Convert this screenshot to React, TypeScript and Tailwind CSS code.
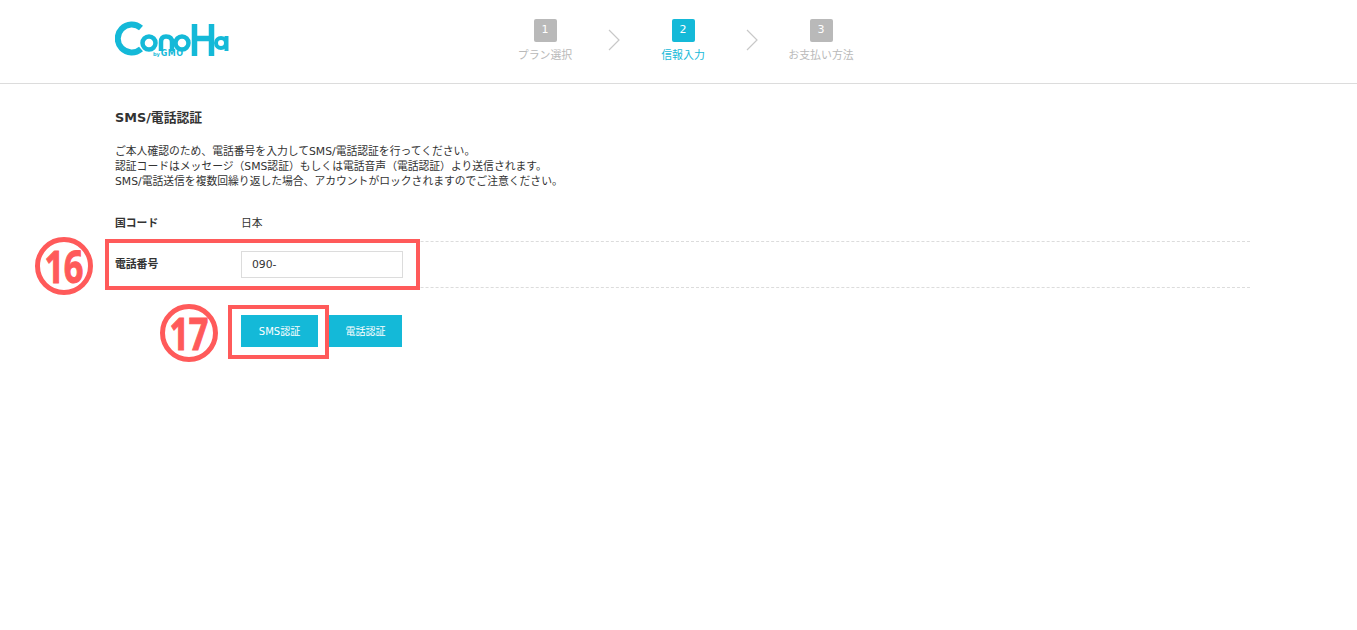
import React from "react";

const font = { fontFamily: '"DejaVu Sans", "Noto Sans CJK JP", sans-serif' };

const steps = [
  { no: "1", label: "プラン選択", active: false },
  { no: "2", label: "信報入力", active: true },
  { no: "3", label: "お支払い方法", active: false },
];

const Logo = () => (
  <svg width="114" height="40" viewBox="115 20 114 40" fill="none" stroke="#14b9d8">
    <path d="M141 28 A14 14 0 1 0 141 49" strokeWidth="6" />
    <circle cx="149" cy="43" r="6.5" strokeWidth="4.5" />
    <path d="M161 51 V42 Q161 36.5 166 36.5 Q172 36.5 172 42 V51" strokeWidth="4.5" />
    <circle cx="182" cy="43" r="6.5" strokeWidth="4.5" />
    <path d="M194.5 24 V56 M211.5 24 V56 M194 38.5 H212" strokeWidth="5.5" />
    <circle cx="221" cy="43" r="5" strokeWidth="4" />
    <path d="M226.5 36 V51" strokeWidth="4" />
  </svg>
);

const Chevron = () => (
  <svg width="12" height="22" viewBox="0 0 12 22" fill="none" stroke="#c8c8c8" strokeWidth="1.2">
    <path d="M1 1 L11 11 L1 21" />
  </svg>
);

const Header = () => (
  <header className="h-[84px] border-b border-[#dcdcdc] flex pl-[115px]">
    <div className="w-[114px] pt-[20px] relative">
      <Logo />
      <span className="absolute left-[38px] top-[50px] flex items-baseline gap-[1px] leading-[8px] font-bold text-[#14b9d8]">
        <span className="text-[5px]">by</span>
        <span className="text-[8px] tracking-[0.4px]">GMO</span>
      </span>
    </div>
    <div className="ml-[271px] flex items-start pt-[19px]">
      {steps.map((s, i) => (
        <React.Fragment key={s.no}>
          <div className="w-[90px] flex flex-col items-center">
            <div className={`w-[23px] h-[23px] rounded-[2px] flex items-center justify-center text-[11px] text-white ${s.active ? "bg-[#14b9d8]" : "bg-[#b9b9b9]"}`}>
              {s.no}
            </div>
            <div className={`mt-[6px] text-[10.9px] leading-[16px] whitespace-nowrap ${s.active ? "text-[#14b9d8]" : "text-[#b9b9b9]"}`}>
              {s.label}
            </div>
          </div>
          {i < 2 && (
            <div className="w-[48px] flex justify-center pt-[10px]">
              <Chevron />
            </div>
          )}
        </React.Fragment>
      ))}
    </div>
  </header>
);

export default function App() {
  return (
    <div className="relative min-h-[630px] bg-white text-[#333]" style={font}>
      <Header />
      <main className="pl-[115px] w-[1250px]">
        <h2 className="mt-[26px] text-[12.8px] leading-[16px] font-bold">SMS/電話認証</h2>
        <div className="mt-[18px] text-[10.8px] leading-[15px]">
          <p>ご本人確認のため、電話番号を入力してSMS/電話認証を行ってください。</p>
          <p>認証コードはメッセージ（SMS認証）もしくは電話音声（電話認証）より送信されます。</p>
          <p>SMS/電話送信を複数回繰り返した場合、アカウントがロックされますのでご注意ください。</p>
        </div>
        <div className="mt-[18px] text-[10.8px]">
          <div className="flex items-center h-[35px] border-b border-dashed border-[#dcdcdc]">
            <div className="w-[126px] font-bold">国コード</div>
            <div>日本</div>
          </div>
          <div className="flex items-center h-[46px] border-b border-dashed border-[#dcdcdc]">
            <div className="w-[126px] pt-[2px] font-bold">電話番号</div>
            <input
              readOnly
              value="090-"
              className="w-[162px] h-[27px] border border-[#dcdcdc] px-[10px] text-[10.8px] outline-none"
            />
          </div>
        </div>
        <div className="mt-[27px] ml-[126px] flex gap-[11px] text-[10px] text-white">
          <button className="w-[77px] h-[32px] bg-[#14b9d8]">SMS認証</button>
          <button className="w-[73px] h-[32px] bg-[#14b9d8]">電話認証</button>
        </div>
      </main>

      {/* annotations */}
      <div className="absolute left-[105px] top-[239px] w-[315px] h-[51px] border-[4px] border-[#ff5a5a]" />
      <div className="absolute left-[228px] top-[305px] w-[101px] h-[54px] border-[4px] border-[#ff5a5a]" />
      <div className="absolute left-[35px] top-[237px] w-[58px] h-[58px] rounded-full border-[5px] border-[#ff5a5a] flex items-center justify-center text-[#ff5a5a]" style={{ fontFamily: '"Open Sans", sans-serif' }}>
        <span className="text-[44px] leading-none font-bold tracking-[-0.5px] scale-x-[0.78] [-webkit-text-stroke:1px_#ff5a5a]">16</span>
      </div>
      <div className="absolute left-[160px] top-[304px] w-[58px] h-[58px] rounded-full border-[5px] border-[#ff5a5a] flex items-center justify-center text-[#ff5a5a]" style={{ fontFamily: '"Open Sans", sans-serif' }}>
        <span className="text-[44px] leading-none font-bold tracking-[-0.5px] scale-x-[0.78] [-webkit-text-stroke:1px_#ff5a5a]">17</span>
      </div>
    </div>
  );
}
